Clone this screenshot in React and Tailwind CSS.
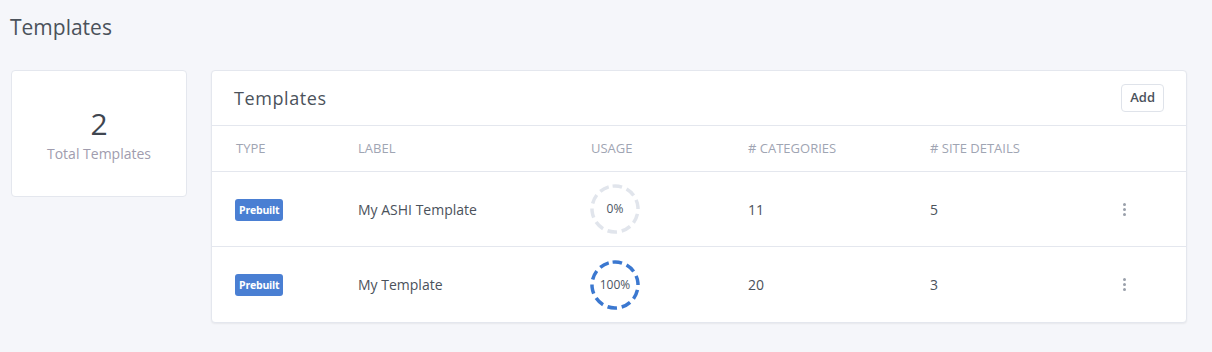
import React from "react";

const templates = [
  { type: "Prebuilt", label: "My ASHI Template", usage: 0, categories: 11, siteDetails: 5 },
  { type: "Prebuilt", label: "My Template", usage: 100, categories: 20, siteDetails: 3 },
];

const cols = "grid grid-cols-[122px_233px_157px_182px_193px_1fr] items-center pl-[24px]";

const UsageRing = ({ value }) => {
  const active = value > 0;
  return (
    <div className="relative w-[50px] h-[50px] flex items-center justify-center -ml-px">
      <svg width="50" height="50" viewBox="0 0 50 50" className="absolute inset-0">
        <circle
          cx="25"
          cy="25"
          r="23"
          fill="none"
          stroke={active ? "#3b78d0" : "#e1e5ec"}
          strokeWidth="3.5"
          strokeDasharray="9.5 4.95"
          transform="rotate(-96 25 25)"
        />
      </svg>
      <span className="text-[12px] text-[#4b5563]">{value}%</span>
    </div>
  );
};

const App = () => {
  return (
    <div
      className="min-h-[352px] bg-[#f5f6fa] px-[11px] pt-[12px]"
      style={{ fontFamily: '"Open Sans", "Noto Sans", sans-serif' }}
    >
      <h1 className="text-[21px] text-[#4b525b] leading-[30px] -ml-px">Templates</h1>

      <div className="flex items-start gap-[24px] mt-[28px]">
        <div className="w-[176px] h-[127px] bg-white rounded border border-[#e4e7ee] flex flex-col items-center justify-center shrink-0">
          <div className="text-[30px] leading-[34px] text-[#3f4650] mt-[4px]">2</div>
          <div className="text-[14px] text-[#a09cae] mt-[2px]">Total Templates</div>
        </div>

        <div className="w-[976px] bg-white rounded border border-[#e4e7ee] shadow-[0_1px_2px_rgba(0,0,0,0.06)]">
          <div className="flex items-center justify-between h-[55px] pl-[22px] pr-[22px] border-b border-[#e4e7ee]">
            <h2 className="text-[18px] tracking-[0.6px] text-[#4b525b]">Templates</h2>
            <button className="h-[28px] px-[8px] border border-[#dfe3ea] rounded text-[13px] font-semibold text-[#4b525b] bg-white">
              Add
            </button>
          </div>

          <div className={`${cols} h-[46px] border-b border-[#e4e7ee] text-[13px] text-[#9fa5b3]`}>
            <div>TYPE</div>
            <div>LABEL</div>
            <div>USAGE</div>
            <div># CATEGORIES</div>
            <div># SITE DETAILS</div>
            <div />
          </div>

          {templates.map((t, i) => (
            <div
              key={i}
              className={`${cols} h-[75px] text-[14px] text-[#4b525b] ${
                i < templates.length - 1 ? "border-b border-[#e4e7ee]" : ""
              }`}
            >
              <div className="-ml-px">
                <span className="inline-block bg-[#4a7fd3] text-white text-[10.5px] font-bold tracking-[-0.2px] rounded-[3px] px-[4px] py-[3px] leading-[16px]">
                  {t.type}
                </span>
              </div>
              <div>{t.label}</div>
              <div>
                <UsageRing value={t.usage} />
              </div>
              <div>{t.categories}</div>
              <div>{t.siteDetails}</div>
              <div className="flex flex-col gap-[2px] w-[3px]">
                <span className="w-[3px] h-[3px] rounded-full bg-[#9aa0ab]" />
                <span className="w-[3px] h-[3px] rounded-full bg-[#9aa0ab]" />
                <span className="w-[3px] h-[3px] rounded-full bg-[#9aa0ab]" />
              </div>
            </div>
          ))}
        </div>
      </div>
    </div>
  );
};

export default App;
